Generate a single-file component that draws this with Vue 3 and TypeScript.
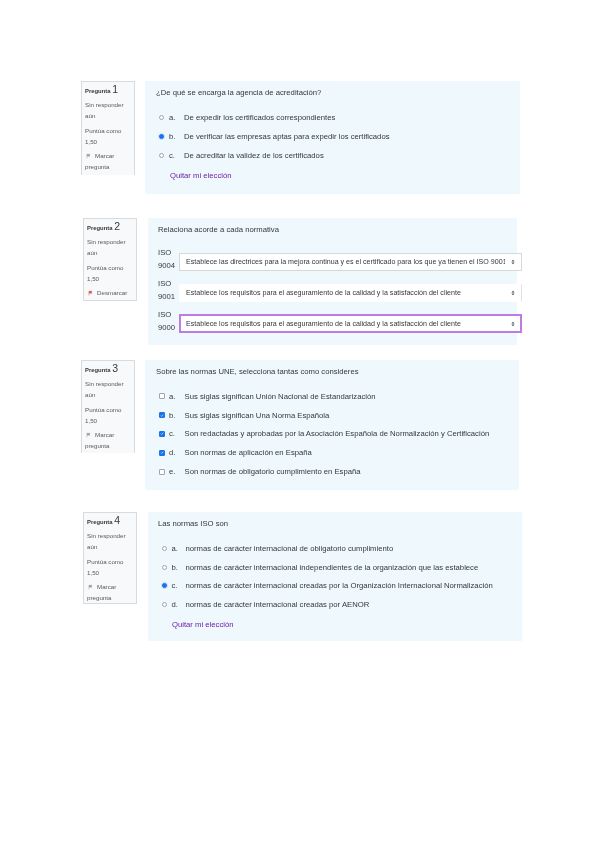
<script setup lang="ts">
interface Opt { l: string; t: string; on?: boolean }
interface Q {
  n: number; cls: string; score: string; flag: string; text: string; kind: string;
  opts?: Opt[]; clear?: boolean; rows?: { k: string; v: string; cls: string }[];
}
const req = 'Establece los requisitos para el aseguramiento de la calidad y la satisfacción del cliente'
const base = 'normas de carácter internacional '
const qs: Q[] = [
  { n: 1, cls: 'q1', score: '1,50', flag: 'Marcar pregunta', kind: 'radio', clear: true,
    text: '¿De qué se encarga la agencia de acreditación?',
    opts: [
      { l: 'a.', t: 'De expedir los certificados correspondientes' },
      { l: 'b.', t: 'De verificar las empresas aptas para expedir los certificados', on: true },
      { l: 'c.', t: 'De acreditar la validez de los certificados' },
    ] },
  { n: 2, cls: 'q2', score: '1,50', flag: 'Desmarcar', kind: 'match',
    text: 'Relaciona acorde a cada normativa',
    rows: [
      { k: 'ISO 9004', cls: 'bordered', v: 'Establece las directrices para la mejora continua y es el certificado para los que ya tienen el ISO 9001' },
      { k: 'ISO 9001', cls: 'plain', v: req },
      { k: 'ISO 9000', cls: 'focus', v: req },
    ] },
  { n: 3, cls: 'q3', score: '1,50', flag: 'Marcar pregunta', kind: 'check',
    text: 'Sobre las normas UNE, selecciona tantas como consideres',
    opts: [
      { l: 'a.', t: 'Sus siglas significan Unión Nacional de Estandarización' },
      { l: 'b.', t: 'Sus siglas significan Una Norma Española', on: true },
      { l: 'c.', t: 'Son redactadas y aprobadas por la Asociación Española de Normalización y Certificación', on: true },
      { l: 'd.', t: 'Son normas de aplicación en España', on: true },
      { l: 'e.', t: 'Son normas de obligatorio cumplimiento en España' },
    ] },
  { n: 4, cls: 'q4', score: '1,50', flag: 'Marcar pregunta', kind: 'radio', clear: true,
    text: 'Las normas ISO son',
    opts: [
      { l: 'a.', t: base + 'de obligatorio cumplimiento' },
      { l: 'b.', t: base + 'independientes de la organización que las establece' },
      { l: 'c.', t: base + 'creadas por la Organización Internacional Normalización', on: true },
      { l: 'd.', t: base + 'creadas por AENOR' },
    ] },
]
</script>

<template>
  <main class="page">
    <section v-for="q in qs" :key="q.n" class="q" :class="q.cls">
      <aside class="info">
        <h3 class="head">Pregunta <b class="num">{{ q.n }}</b></h3>
        <p class="line">Sin responder aún</p>
        <p class="line">Puntúa como {{ q.score }}</p>
        <p class="line flag">
          <svg class="flagicon" :class="{ red: q.flag === 'Desmarcar' }" viewBox="0 0 8 8" width="5" height="6">
            <path d="M1.5 1v7M1.5 1.2h5l-1.4 1.5 1.4 1.5h-5" fill="currentColor" stroke="currentColor" stroke-width=".7" />
          </svg>
          <span>{{ q.flag }}</span>
        </p>
      </aside>
      <div class="content">
        <p class="text">{{ q.text }}</p>
        <template v-if="q.opts">
          <div v-for="o in q.opts" :key="o.l" class="opt">
            <span class="mark" :class="[q.kind, { on: o.on }]">
              <svg v-if="o.on && q.kind === 'check'" viewBox="0 0 8 8" width="7" height="7">
                <path d="M1.6 4.2l1.7 1.7 3.2-3.6" fill="none" stroke="#fff" stroke-width="1.2" />
              </svg>
            </span>
            <span class="letter">{{ o.l }}</span>
            <span class="otext">{{ o.t }}</span>
          </div>
          <a v-if="q.clear" class="clear">Quitar mi elección</a>
        </template>
        <div v-for="r in q.rows" :key="r.k" class="row">
          <span class="key">{{ r.k }}</span>
          <div class="sel" :class="r.cls">
            <span class="seltext">{{ r.v }}</span>
            <svg viewBox="0 0 6 8" width="4" height="6" class="arrows">
              <path d="M3 .5 5.4 3.3H.6zM3 7.5 .6 4.7h4.8z" fill="#495057" />
            </svg>
          </div>
        </div>
      </div>
    </section>
  </main>
</template>

<style scoped>
.page {
  width: 600px;
  height: 848px;
  box-sizing: border-box;
  padding-top: 81px;
  background: #fff;
  font-family: "Liberation Sans", Arial, sans-serif;
  color: #33383c;
  overflow: hidden;
  filter: blur(0.35px);
}
.q { display: flex; align-items: flex-start; }
.q1 { margin-left: 81px; }
.q2 { margin-left: 83px; margin-top: 24px; }
.q3 { margin-left: 81px; margin-top: 15px; }
.q4 { margin-left: 83px; margin-top: 22px; }

.info {
  width: 54px;
  box-sizing: border-box;
  padding: 2px 4px 0 3px;
  background: #f8f9fa;
  border: 1px solid #d9dcdf;
  border-bottom: 0;
  font-size: 6.2px;
  line-height: 11px;
  color: #555a5f;
}
.q1 .info { height: 94px; }
.q2 .info { height: 83px; border-bottom: 1px solid #d9dcdf; }
.q3 .info { height: 93px; }
.q4 .info { height: 92px; border-bottom: 1px solid #d9dcdf; }
.head { margin: 0 0 2px; font-size: 5.9px; font-weight: 700; color: #33383c; line-height: 11px; }
.num { font-size: 10.5px; font-weight: 400; }
.line { margin: 0 0 3.5px; }
.flagicon { color: #9a9fa4; margin: 0 4px 0 1px; vertical-align: -1px; }
.flagicon.red { color: #d9534f; }

.content {
  margin-left: 10px;
  box-sizing: border-box;
  background: #eff8fc;
  padding: 6px 10px 0 11px;
  font-size: 7.7px;
  color: #33383c;
}
.q1 .content { width: 375px; height: 113px; }
.q2 .content { width: 369px; height: 127px; margin-left: 11px; padding-left: 10px; }
.q3 .content { width: 374px; height: 130px; }
.q4 .content { width: 374px; height: 129px; margin-left: 11px; padding-left: 10px; }
.text { margin: 0 0 9px; line-height: 12px; }
.opt { display: flex; align-items: center; height: 19px; padding-left: 3px; }
.q3 .opt { height: 18.8px; padding-left: 2.5px; }
.q4 .opt { height: 18.7px; padding-left: 3.5px; }
.mark {
  width: 5px;
  height: 5px;
  flex: none;
  box-sizing: border-box;
  border: 0.7px solid #a0a5aa;
  background: #fff;
  display: flex;
  align-items: center;
  justify-content: center;
}
.mark.radio { border-radius: 50%; }
.mark.radio.on { background: #1a73e8; border-color: #1a73e8; box-shadow: 0 0 0 1px #cfe2fb; }
.mark.check { width: 6px; height: 6px; border-radius: 1px; }
.mark.check.on { background: #1a73e8; border-color: #1a73e8; }
.letter { width: 15px; margin-left: 5px; flex: none; }
.q3 .letter { width: 15.5px; margin-left: 4.5px; }
.q4 .letter { width: 14px; }
.otext { white-space: nowrap; }
.clear { display: block; margin: 5px 0 0 14px; color: #6a1fa8; line-height: 12px; }

.row { display: flex; align-items: center; height: 31px; margin-right: -15px; }
.q2 .text + .row { margin-top: 10px; }
.key { width: 21px; flex: none; line-height: 13.5px; margin-bottom: 5px; }
.sel {
  flex: 1;
  min-width: 0;
  height: 18px;
  box-sizing: border-box;
  display: flex;
  align-items: center;
  background: #fff;
  padding: 0 6px 0 6px;
  font-size: 7.1px;
}
.sel.bordered { border: 1px solid #d5d9dc; }
.sel.plain { border: 1px solid transparent; border-right-color: #e0e3e6; }
.sel.focus { height: 19px; border: 2px solid #bc7be6; padding-left: 5px; padding-right: 5px; }
.seltext { flex: 1; min-width: 0; white-space: nowrap; overflow: hidden; text-overflow: clip; }
.arrows { flex: none; margin-left: 6px; }
</style>

<style>
body { margin: 0; background: #fff; }
</style>
